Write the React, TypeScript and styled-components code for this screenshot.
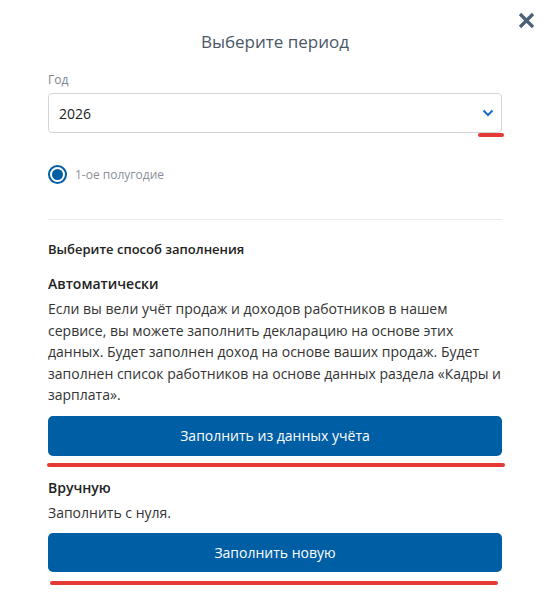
import React from "react";
import styled, { createGlobalStyle } from "styled-components";

const Global = createGlobalStyle`
  html, body { margin: 0; padding: 0; background: #fff; }
  body { font-family: "Open Sans", "Noto Sans", sans-serif; color: #222; }
  * { box-sizing: border-box; }
`;

const Modal = styled.div`
  position: relative;
  width: 546px;
  height: 608px;
  background: #fff;
  padding: 30px 44px 0 48px;
  display: flex;
  flex-direction: column;
`;

const CloseButton = styled.button`
  position: absolute;
  top: 10px;
  right: 10px;
  width: 20px;
  height: 20px;
  padding: 0;
  border: none;
  background: transparent;
  display: flex;
  align-items: center;
  justify-content: center;
  cursor: pointer;
`;

const Title = styled.h2`
  margin: 0;
  font-size: 17px;
  line-height: 24px;
  font-weight: 400;
  color: #4a5766;
  text-align: center;
`;

const FieldLabel = styled.div`
  margin-top: 18px;
  font-size: 12px;
  line-height: 16px;
  color: #7d8591;
`;

const Mark = styled.span<{ $left: number; $right: number; $top: number }>`
  position: absolute;
  left: ${(p) => p.$left}px;
  right: ${(p) => p.$right}px;
  top: ${(p) => p.$top}px;
  height: 4px;
  border-radius: 2px;
  background: #e53935;
  pointer-events: none;
`;

const SelectWrap = styled.div`
  position: relative;
  margin-top: 5px;
`;

const SelectBox = styled.div`
  height: 40px;
  border: 1px solid #d2d5d9;
  border-radius: 4px;
  display: flex;
  align-items: center;
  justify-content: space-between;
  padding: 0 6px 0 10px;
  font-size: 14px;
  color: #222;
`;

const RadioRow = styled.label`
  margin-top: 31px;
  display: flex;
  align-items: center;
  gap: 8px;
  font-size: 12px;
  color: #8a9099;
  height: 20px;
`;

const RadioDot = styled.span`
  width: 19px;
  height: 19px;
  border-radius: 50%;
  border: 2px solid #005ea5;
  display: flex;
  align-items: center;
  justify-content: center;
  &::after {
    content: "";
    width: 11px;
    height: 11px;
    border-radius: 50%;
    background: #005ea5;
  }
`;

const Divider = styled.hr`
  margin: 35px 0 0;
  border: none;
  border-top: 1px solid #ececec;
  height: 0;
`;

const SectionTitle = styled.div`
  margin-top: 20px;
  font-size: 13px;
  line-height: 18px;
  font-weight: 600;
  color: #222;
`;

const OptionTitle = styled.div<{ $gap: number }>`
  margin-top: ${(p) => p.$gap}px;
  font-size: 14px;
  line-height: 20px;
  font-weight: 600;
  color: #222;
`;

const Text = styled.p`
  margin: 4px 0 0;
  font-size: 14px;
  line-height: 21.5px;
  color: #333;
`;

const ButtonWrap = styled.div`
  position: relative;
  margin-top: 10px;
`;

const PrimaryButton = styled.button<{ $h: number }>`
  width: 100%;
  height: ${(p) => p.$h}px;
  border: none;
  border-radius: 5px;
  background: #005ea5;
  color: #fff;
  font-family: inherit;
  font-size: 14px;
  cursor: pointer;
`;

export default function App() {
  return (
    <>
      <Global />
      <Modal>
        <CloseButton aria-label="Закрыть">
          <svg width="17" height="17" viewBox="0 0 17 17">
            <path d="M2 2 L15 15 M15 2 L2 15" stroke="#4a6178" strokeWidth="3.2" strokeLinecap="butt" />
          </svg>
        </CloseButton>
        <Title>Выберите период</Title>
        <FieldLabel>Год</FieldLabel>
        <SelectWrap>
          <SelectBox>
            <span>2026</span>
            <svg width="14" height="14" viewBox="0 0 14 14">
              <path d="M2.5 4.5 L7 9 L11.5 4.5" fill="none" stroke="#1a6fc4" strokeWidth="2" />
            </svg>
          </SelectBox>
          <Mark $left={430} $right={-2} $top={40} />
        </SelectWrap>
        <RadioRow>
          <RadioDot />
          1-ое полугодие
        </RadioRow>
        <Divider />
        <SectionTitle>Выберите способ заполнения</SectionTitle>
        <OptionTitle $gap={16}>Автоматически</OptionTitle>
        <Text>
          Если вы вели учёт продаж и доходов работников в нашем сервисе, вы можете заполнить
          декларацию на основе этих данных. Будет заполнен доход на основе ваших продаж. Будет
          заполнен список работников на основе данных раздела «Кадры и зарплата».
        </Text>
        <ButtonWrap>
          <PrimaryButton $h={40}>Заполнить из данных учёта</PrimaryButton>
          <Mark $left={-1} $right={-3} $top={47} />
        </ButtonWrap>
        <OptionTitle $gap={22}>Вручную</OptionTitle>
        <Text>Заполнить с нуля.</Text>
        <ButtonWrap>
          <PrimaryButton $h={39}>Заполнить новую</PrimaryButton>
          <Mark $left={2} $right={4} $top={48} />
        </ButtonWrap>
      </Modal>
    </>
  );
}
